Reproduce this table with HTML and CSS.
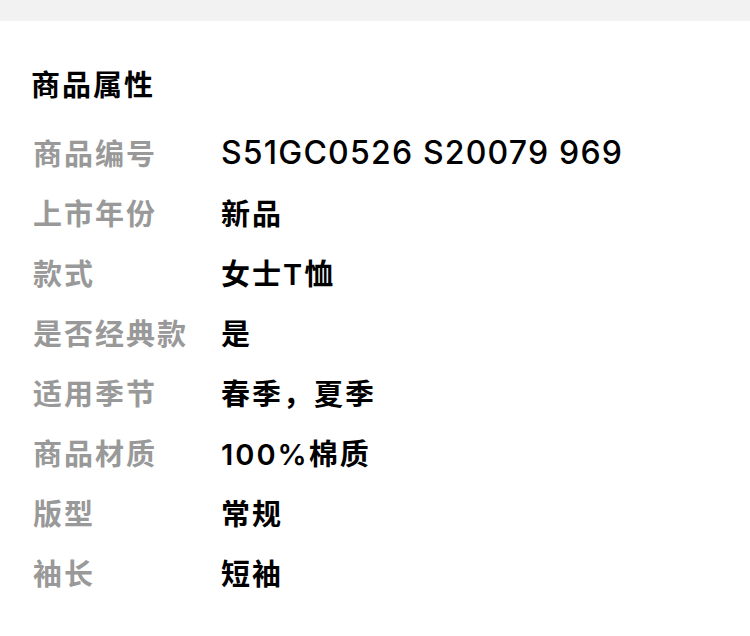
FILE: index.html
```html
<!DOCTYPE html>
<html lang="zh-CN">
<head>
  <meta charset="UTF-8" />
  <title>商品属性</title>
  <link rel="stylesheet" href="styles.css">
</head>
<body>
  <div class="top-bar"></div>
  <div class="attrs">
    <div class="attrs-title">商品属性</div>
    <div class="attrs-list">
      <div class="attr-label">商品编号</div>
      <div class="attr-value attr-code">S51GC0526 S20079 969</div>
      <div class="attr-label">上市年份</div>
      <div class="attr-value">新品</div>
      <div class="attr-label">款式</div>
      <div class="attr-value">女士T恤</div>
      <div class="attr-label">是否经典款</div>
      <div class="attr-value">是</div>
      <div class="attr-label">适用季节</div>
      <div class="attr-value">春季，夏季</div>
      <div class="attr-label">商品材质</div>
      <div class="attr-value">100%棉质</div>
      <div class="attr-label">版型</div>
      <div class="attr-value">常规</div>
      <div class="attr-label">袖长</div>
      <div class="attr-value">短袖</div>
    </div>
  </div>
</body>
</html>
```

FILE: styles.css
```css
html, body {
  margin: 0; padding: 0; background: #fff;
  font-family: "Noto Sans", "Noto Sans CJK SC", sans-serif;
}
.top-bar {
  height: 21px; background: #f2f2f2;
}
.attrs {
  padding: 44px 0 0 31px;
}
.attrs-title {
  font-size: 29px; line-height: 40px; font-weight: 700;
  letter-spacing: 2px; color: #000;
}
.attrs-list {
  margin-top: 17px; margin-left: 2px;
  display: grid; grid-template-columns: 188px 1fr;
  grid-auto-rows: 60px; align-items: center;
}
.attr-label {
  font-size: 29px; font-weight: 700; color: #999;
  letter-spacing: 2px;
}
.attr-value {
  font-family: "Inter", "Noto Sans CJK SC", sans-serif;
  font-size: 29px; font-weight: 600; color: #000;
  letter-spacing: 2px;
}
.attr-code {
  font-size: 32px; font-weight: 500; letter-spacing: 1.2px;
}
```
